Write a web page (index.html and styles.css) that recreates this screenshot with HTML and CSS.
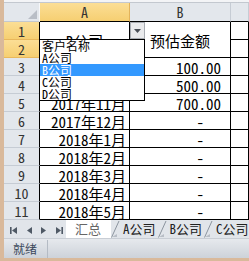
FILE: index.html
```html
<!DOCTYPE html>
<html lang="zh">
<head>
<meta charset="utf-8">
<link rel="stylesheet" href="styles.css">
</head>
<body>
<div class="window">
  <div class="topstrip"></div>
  <div class="sheet">
    <div class="corner"><svg width="9" height="9" viewBox="0 0 9 9"><path d="M9 0 L9 9 L0 9 Z" fill="#b9bec6"/></svg></div>
    <div class="colhdr sel">A</div>
    <div class="colhdr">B</div>
    <div class="colhdr"></div>

    <div class="rowhdr sel">1</div>
    <div class="cell merged center">B公司</div>
    <div class="cell merged center">预估金额</div>
    <div class="cell"></div>
    <div class="rowhdr sel">2</div>
    <div class="cell"></div>

    <div class="rowhdr">3</div>
    <div class="cell date"></div>
    <div class="cell num">100.00</div>
    <div class="cell"></div>

    <div class="rowhdr">4</div>
    <div class="cell date"></div>
    <div class="cell num">500.00</div>
    <div class="cell"></div>

    <div class="rowhdr">5</div>
    <div class="cell date">2017年11月</div>
    <div class="cell num">700.00</div>
    <div class="cell"></div>

    <div class="rowhdr">6</div>
    <div class="cell date">2017年12月</div>
    <div class="cell dash">-</div>
    <div class="cell"></div>

    <div class="rowhdr">7</div>
    <div class="cell date">2018年1月</div>
    <div class="cell dash">-</div>
    <div class="cell"></div>

    <div class="rowhdr">8</div>
    <div class="cell date">2018年2月</div>
    <div class="cell dash">-</div>
    <div class="cell"></div>

    <div class="rowhdr">9</div>
    <div class="cell date">2018年3月</div>
    <div class="cell dash">-</div>
    <div class="cell"></div>

    <div class="rowhdr">10</div>
    <div class="cell date">2018年4月</div>
    <div class="cell dash">-</div>
    <div class="cell"></div>

    <div class="rowhdr">11</div>
    <div class="cell date">2018年5月</div>
    <div class="cell dash">-</div>
    <div class="cell"></div>
  </div>

  <div class="tabbar">
    <svg class="nav" width="62" height="18" viewBox="0 0 62 18">
      <rect x="6" y="7" width="1.6" height="7" fill="#4f5965"/>
      <path d="M13 7 L8 10.5 L13 14 Z" fill="#4f5965"/>
      <path d="M28 7 L23 10.5 L28 14 Z" fill="#4f5965"/>
      <path d="M37 7 L42 10.5 L37 14 Z" fill="#4f5965"/>
      <path d="M52 7 L57 10.5 L52 14 Z" fill="#4f5965"/>
      <rect x="57.4" y="7" width="1.6" height="7" fill="#4f5965"/>
    </svg>
    <div class="tab active">汇总</div>
    <svg class="sep" width="10" height="18" viewBox="0 0 10 18"><path d="M0.5 17.5 L8 1" stroke="#8b949f" fill="none"/><path d="M1 17 L6 17 L6 14 Z" fill="#b8bec6"/></svg>
    <div class="tab">A公司</div>
    <svg class="sep" width="10" height="18" viewBox="0 0 10 18"><path d="M0.5 17.5 L8 1" stroke="#8b949f" fill="none"/><path d="M1 17 L6 17 L6 14 Z" fill="#b8bec6"/></svg>
    <div class="tab">B公司</div>
    <svg class="sep" width="10" height="18" viewBox="0 0 10 18"><path d="M0.5 17.5 L8 1" stroke="#8b949f" fill="none"/><path d="M1 17 L6 17 L6 14 Z" fill="#b8bec6"/></svg>
    <div class="tab">C公司</div>
  </div>

  <div class="statusbar">
    <span class="status">就绪</span>
    <span class="statussep"></span>
  </div>

  <div class="ddbtn"><svg width="7" height="4" viewBox="0 0 7 4"><path d="M0 0 L7 0 L3.5 4 Z" fill="#4a4f57"/></svg></div>
  <ul class="ddlist">
    <li>客户名称</li>
    <li>A公司</li>
    <li class="hl">B公司</li>
    <li>C公司</li>
    <li>D公司</li>
  </ul>
</div>
</body>
</html>
```

FILE: styles.css
```css
* { box-sizing: border-box; }
html, body {
  margin: 0;
  padding: 0;
}
body {
  width: 249px;
  height: 261px;
  overflow: hidden;
  background: #d9b99b;
  font-family: "Noto Sans CJK SC", sans-serif;
  font-feature-settings: "hwid";
}
.window {
  position: relative;
  margin-left: 4px;
  width: 245px;
  height: 258px;
  background: #ffffff;
  display: flex;
  flex-direction: column;
}
.topstrip {
  height: 3px;
  background: #f3f4f6;
  border-bottom: 1px solid #c3c8cf;
}
.sheet {
  display: grid;
  grid-template-columns: 36px 90px 101px 18px;
  grid-template-rows: 19px repeat(11, 18px);
}
.corner {
  background: #e3e7ec;
  border-right: 1px solid #f6f7f9;
  border-bottom: 1px solid #c3c8cf;
  display: flex;
  align-items: flex-end;
  justify-content: flex-end;
  padding: 0 2px 2px 0;
}
.colhdr {
  background: #e3e7ec;
  border-right: 1px solid #c6ccd4;
  border-bottom: 1px solid #000;
  color: #333;
  font-size: 14px;
  line-height: 18px;
  text-align: center;
}
.rowhdr {
  background: #e3e7ec;
  border-right: 1px solid #000;
  border-bottom: 1px solid #c6ccd4;
  color: #333;
  font-size: 14px;
  line-height: 18px;
  text-align: center;
}
.sel {
  background: linear-gradient(#fbde95, #f6cf72);
  border-bottom-color: #e9b85c;
}
.colhdr.sel { border-bottom-color: #000; border-right-color: #e3b35a; }
.cell {
  border-right: 1px solid #000;
  border-bottom: 1px solid #000;
  font-size: 15px;
  line-height: 18px;
  color: #000;
  white-space: nowrap;
  padding-top: 1px;
}
.merged {
  grid-row: span 2;
  display: flex;
  align-items: center;
  justify-content: center;
  padding-top: 2px;
}
.date { text-align: right; padding-right: 3px; }
.num { text-align: right; padding-right: 9px; }
.dash { text-align: right; padding-right: 26px; }

.tabbar {
  height: 18px;
  background: #e1e5ea;
  display: flex;
  align-items: stretch;
  font-size: 13px;
  line-height: 17px;
  color: #222;
  white-space: nowrap;
  overflow: hidden;
}
.nav { flex: none; }
.tab {
  padding: 0 2px;
  flex: none;
}
.tab.active {
  background: #fff;
  color: #666;
  padding: 0 10px 0 9px;
}
.sep { flex: none; }

.statusbar {
  height: 20px;
  background: linear-gradient(#e6e9ed, #cdd2d9);
  border-top: 1px solid #c9ced5;
  display: flex;
  align-items: center;
}
.status {
  font-size: 12px;
  color: #3a485a;
  padding-left: 9px;
  width: 43px;
}
.statussep {
  width: 1px;
  height: 18px;
  background: #b4bbc4;
}

.ddbtn {
  position: absolute;
  left: 126px;
  top: 22px;
  width: 15px;
  height: 17px;
  background: #e9eaec;
  border: 1px solid #a9adb3;
  display: flex;
  align-items: center;
  justify-content: center;
}
.ddlist {
  position: absolute;
  left: 35px;
  top: 39px;
  width: 106px;
  margin: 0;
  padding: 0;
  list-style: none;
  background: #fff;
  border: 1px solid #000;
  font-size: 12px;
  line-height: 12px;
}
.ddlist li {
  height: 12px;
  padding-left: 2px;
  white-space: nowrap;
}
.ddlist li.hl {
  background: #3399ff;
  color: #fff;
}
```
